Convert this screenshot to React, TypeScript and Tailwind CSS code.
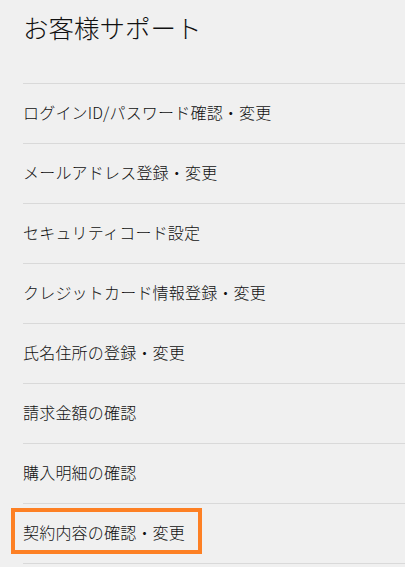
import React from "react";

const items = [
  "ログインID/パスワード確認・変更",
  "メールアドレス登録・変更",
  "セキュリティコード設定",
  "クレジットカード情報登録・変更",
  "氏名住所の登録・変更",
  "請求金額の確認",
  "購入明細の確認",
  "契約内容の確認・変更",
];

export default function App() {
  return (
    <main
      className="min-h-screen bg-[#f0f0f0] pl-[23px] text-[#111]"
      style={{ fontFamily: '"Noto Sans CJK JP", "Noto Sans", sans-serif' }}
    >
      <h1 className="h-[83px] pt-[9px] text-[25.5px] leading-[36px] font-light">
        お客様サポート
      </h1>
      <ul className="border-t border-[#d9d9d9]">
        {items.map((label, i) => (
          <li
            key={label}
            className="relative flex h-[60px] items-center border-b border-[#d9d9d9] pb-[4px] text-[16px] font-light tracking-[0.2px]"
          >
            {i === items.length - 1 && (
              <span className="pointer-events-none absolute left-[-12px] top-[4px] h-[46px] w-[191px] border-4 border-[#fd8024]" />
            )}
            {label}
          </li>
        ))}
      </ul>
    </main>
  );
}
